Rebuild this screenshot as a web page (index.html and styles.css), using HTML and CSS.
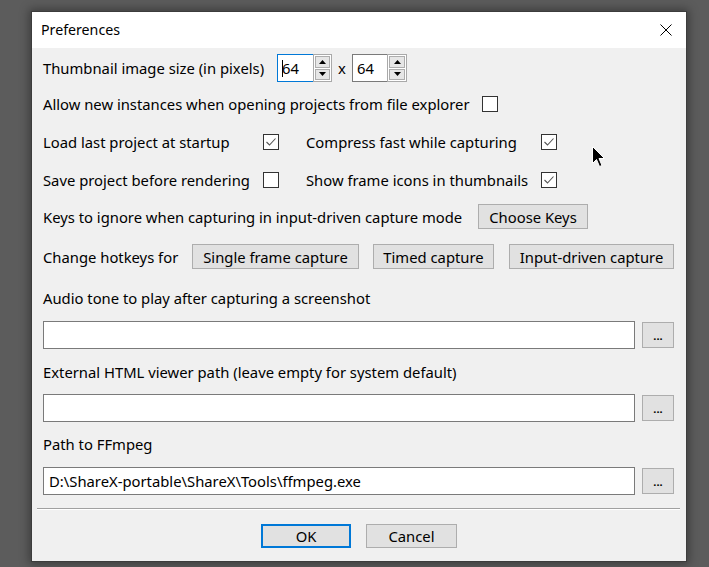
FILE: index.html
```html
<!DOCTYPE html>
<html>
<head>
<meta charset="utf-8">
<link rel="stylesheet" href="styles.css">
</head>
<body>
<div class="window">
  <div class="titlebar">
    <span class="title">Preferences</span>
    <svg class="close" width="12" height="12" viewBox="0 0 12 12"><path d="M0.5 0.5 L11.5 11.5 M11.5 0.5 L0.5 11.5" stroke="#000" stroke-width="1" fill="none"/></svg>
  </div>
  <div class="content">
    <div class="row r1">
      <span class="lbl w-thumb">Thumbnail image size (in pixels)</span>
      <div class="spin focused">
        <div class="field"><span class="caret"></span>64</div>
        <div class="arrows">
          <div class="arr"><svg width="7" height="4" viewBox="0 0 7 4"><path d="M3.5 0 L7 4 L0 4 Z" fill="#000"/></svg></div>
          <div class="arr"><svg width="7" height="4" viewBox="0 0 7 4"><path d="M0 0 L7 0 L3.5 4 Z" fill="#000"/></svg></div>
        </div>
      </div>
      <span class="times">x</span>
      <div class="spin">
        <div class="field">64</div>
        <div class="arrows">
          <div class="arr"><svg width="7" height="4" viewBox="0 0 7 4"><path d="M3.5 0 L7 4 L0 4 Z" fill="#000"/></svg></div>
          <div class="arr"><svg width="7" height="4" viewBox="0 0 7 4"><path d="M0 0 L7 0 L3.5 4 Z" fill="#000"/></svg></div>
        </div>
      </div>
    </div>

    <div class="row r2">
      <span class="lbl w-allow">Allow new instances when opening projects from file explorer</span>
      <span class="cb"></span>
    </div>

    <div class="row grid2 r3">
      <span class="lbl">Load last project at startup</span>
      <span class="cb checked"><svg width="14" height="14" viewBox="0 0 14 14"><path d="M2.5 7 L5.5 10 L11.5 3.5" stroke="#555" stroke-width="1.1" fill="none"/></svg></span>
      <span class="lbl">Compress fast while capturing</span>
      <span class="cb checked"><svg width="14" height="14" viewBox="0 0 14 14"><path d="M2.5 7 L5.5 10 L11.5 3.5" stroke="#555" stroke-width="1.1" fill="none"/></svg></span>
    </div>

    <div class="row grid2 r4">
      <span class="lbl">Save project before rendering</span>
      <span class="cb"></span>
      <span class="lbl">Show frame icons in thumbnails</span>
      <span class="cb checked"><svg width="14" height="14" viewBox="0 0 14 14"><path d="M2.5 7 L5.5 10 L11.5 3.5" stroke="#555" stroke-width="1.1" fill="none"/></svg></span>
    </div>

    <div class="row r5">
      <span class="lbl w-keys">Keys to ignore when capturing in input-driven capture mode</span>
      <span class="btn b-keys">Choose Keys</span>
    </div>

    <div class="row r6">
      <span class="lbl w-hot">Change hotkeys for</span>
      <span class="btn b-single">Single frame capture</span>
      <span class="btn b-timed">Timed capture</span>
      <span class="btn b-input">Input-driven capture</span>
    </div>

    <div class="label-row l1">Audio tone to play after capturing a screenshot</div>
    <div class="input-row i1">
      <div class="textbox"></div>
      <span class="btn dots">...</span>
    </div>

    <div class="label-row l2">External HTML viewer path (leave empty for system default)</div>
    <div class="input-row i2">
      <div class="textbox"></div>
      <span class="btn dots">...</span>
    </div>

    <div class="label-row l3">Path to FFmpeg</div>
    <div class="input-row i3">
      <div class="textbox">D:\ShareX-portable\ShareX\Tools\ffmpeg.exe</div>
      <span class="btn dots">...</span>
    </div>
  </div>
  <div class="sep"></div>
  <div class="footer">
    <span class="btn ok">OK</span>
    <span class="btn cancel">Cancel</span>
  </div>
</div>
<svg class="cursor" width="14" height="22" viewBox="0 0 14 22">
  <path d="M0.5 0.5 L0.5 17.5 L4.5 13.5 L7.5 20.5 L10 19.5 L7 12.5 L12.5 12.5 Z" fill="#000" stroke="#fff" stroke-width="1"/>
</svg>
</body>
</html>
```
FILE: styles.css
```css
* { box-sizing: border-box; }
html, body { margin: 0; padding: 0; }
body {
  width: 709px;
  height: 567px;
  overflow: hidden;
  background: #5c5c5c;
  font-family: "Noto Sans", "Open Sans", sans-serif;
  font-size: 14.8px;
  color: #000;
  position: relative;
  padding-top: 11px;
  padding-left: 31px;
}
.window {
  width: 656px;
  height: 551px;
  background: #f0f0f0;
  border: 1px solid #3c3c3c;
  box-shadow: 0 0 9px 2px rgba(0,0,0,0.35);
  display: flex;
  flex-direction: column;
}
.titlebar {
  height: 36px;
  background: #fff;
  display: flex;
  align-items: center;
  justify-content: space-between;
  padding: 0 14px 0 9px;
  flex: none;
}
.title { font-size: 14.2px; line-height: 20px; }
.close { display: block; }
.content {
  padding-left: 11px;
  display: flex;
  flex-direction: column;
}
.row { display: flex; align-items: center; }
.lbl { white-space: nowrap; line-height: 20px; }
.r1 { margin-top: 6px; height: 28px; }
.r2 { margin-top: 10px; height: 24px; }
.r3 { margin-top: 14px; height: 24px; }
.r4 { margin-top: 14px; height: 24px; }
.r5 { margin-top: 12px; height: 25px; }
.r6 { margin-top: 15px; height: 25px; }
.grid2 {
  display: grid;
  grid-template-columns: 220px 43px 235px 16px;
  align-items: center;
}
.w-thumb { width: 234px; }
.w-allow { width: 439px; }
.w-keys { width: 435px; }
.w-hot { width: 149px; }

.spin { display: flex; height: 28px; }
.spin .field {
  width: 35px;
  height: 28px;
  background: #fff;
  border: 1px solid #7a7a7a;
  border-right: none;
  padding-left: 4px;
  line-height: 26px;
  position: relative;
}
.spin.focused .field { border-color: #0078d7; width: 36px; }
.caret {
  position: absolute;
  left: 4px;
  top: 5px;
  width: 1px;
  height: 17px;
  background: #000;
}
.arrows {
  width: 20px;
  height: 28px;
  display: flex;
  flex-direction: column;
  border: 1px solid #a9a9a9;
  background: #fff;
}
.spin.focused .arrows { width: 19px; }
.arr {
  flex: 1;
  margin: 1px;
  background: #e6e6e6;
  border: 1px solid #adadad;
  display: flex;
  align-items: center;
  justify-content: center;
}
.arr + .arr { margin-top: 0; }
.times { width: 20px; text-align: center; line-height: 20px; }

.cb {
  width: 16px;
  height: 16px;
  border: 1px solid #333;
  background: #fff;
  display: flex;
  align-items: center;
  justify-content: center;
}
.cb svg { display: block; }

.btn {
  display: flex;
  align-items: center;
  justify-content: center;
  background: #e1e1e1;
  border: 1px solid #adadad;
  height: 25px;
  white-space: nowrap;
  line-height: 20px;
}
.b-keys { width: 110px; }
.b-single { width: 167px; }
.b-timed { width: 121px; margin-left: 14px; }
.b-input { width: 165px; margin-left: 15px; }

.label-row { height: 20px; line-height: 20px; white-space: nowrap; }
.l1 { margin-top: 19px; }
.l2 { margin-top: 13px; }
.l3 { margin-top: 12px; }
.input-row { display: flex; align-items: center; height: 28px; }
.i1 { margin-top: 13px; }
.i2 { margin-top: 12px; }
.i3 { margin-top: 13px; }
.textbox {
  width: 592px;
  height: 28px;
  background: #fff;
  border: 1px solid #7a7a7a;
  padding-left: 5px;
  line-height: 26px;
  white-space: nowrap;
}
.dots {
  width: 32px;
  height: 26px;
  margin-left: 7px;
  font-size: 11px;
  font-weight: bold;
  padding-top: 2px;
}

.sep {
  margin: 13px 6px 0 5px;
  height: 2px;
  border-top: 1px solid #a0a0a0;
  border-bottom: 1px solid #fff;
  flex: none;
}
.footer {
  display: flex;
  padding-left: 229px;
  margin-top: 14px;
}
.ok {
  width: 90px;
  height: 24px;
  border: 2px solid #0078d7;
}
.cancel {
  width: 91px;
  height: 24px;
  margin-left: 15px;
}

.cursor {
  position: absolute;
  left: 592px;
  top: 146px;
}
```
